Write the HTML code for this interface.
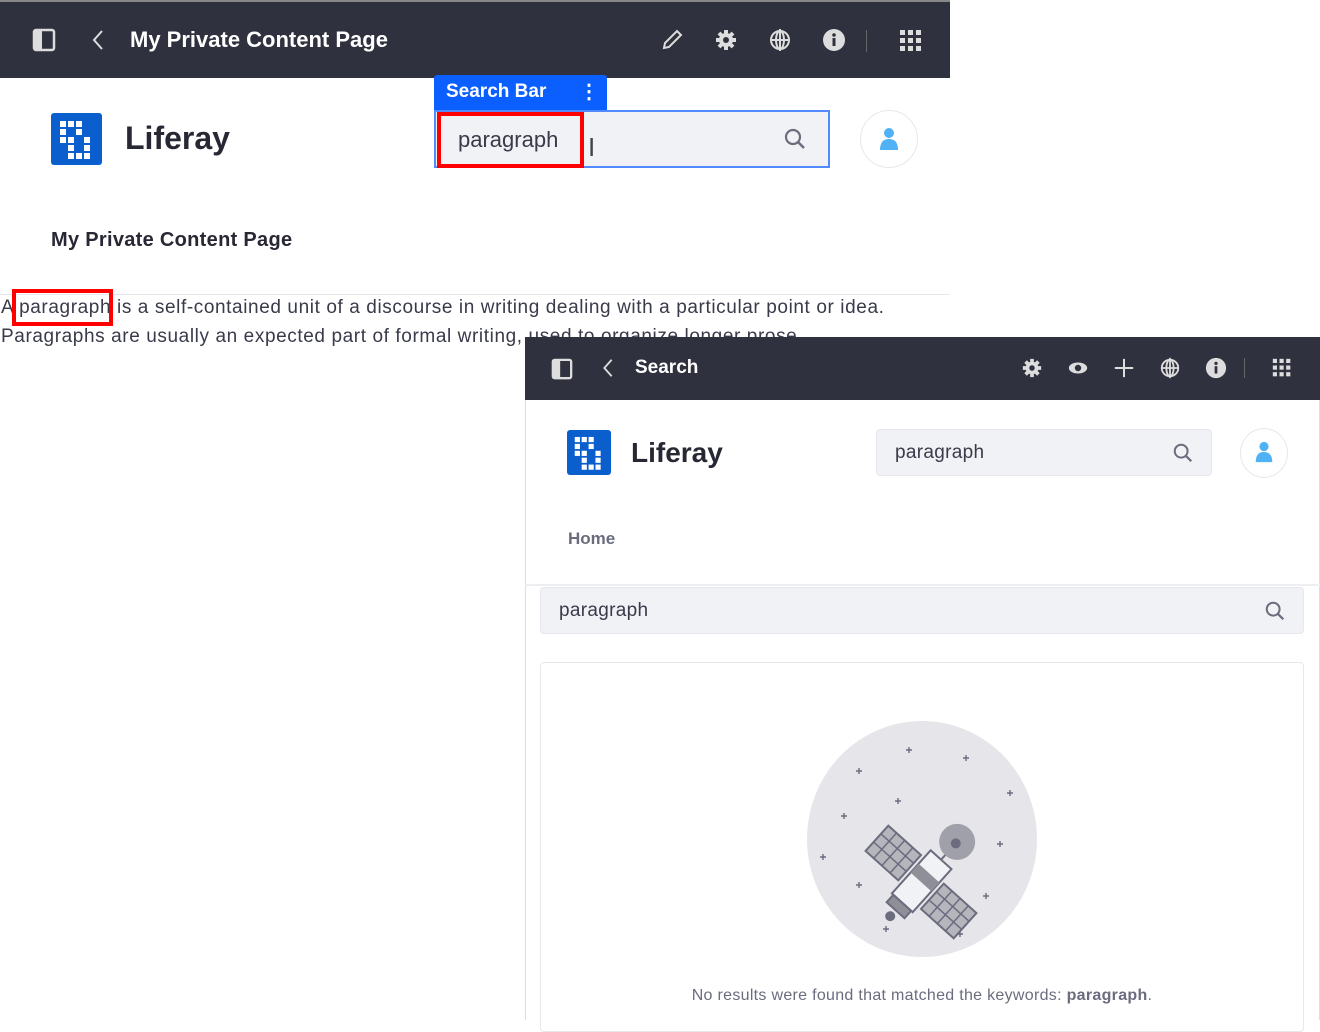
<!DOCTYPE html>
<html><head><meta charset="utf-8"><style>
*{margin:0;padding:0;box-sizing:border-box}
body{width:1320px;height:1020px;background:#fff;position:relative;overflow:hidden;font-family:"Liberation Sans",sans-serif;color:#272833}
.abs{position:absolute}
.bar{background:#30313f;color:#fff}
.t{font-weight:bold;white-space:nowrap}
.logo{background:#0b5fcd;border-radius:3px}
</style></head><body>

<div class="abs bar" style="left:0;top:0;width:950px;height:78px;border-top:2px solid #888"></div>
<svg class="abs" style="left:32px;top:28px" width="24" height="24" viewBox="0 0 24 24"><rect x="2" y="2" width="20" height="20" rx="2" fill="none" stroke="#ddd" stroke-width="2.5"/><rect x="2" y="2" width="8" height="20" fill="#ddd"/></svg>
<svg class="abs" style="left:90px;top:28px" width="16" height="24" viewBox="0 0 16 24"><path d="M12 3 L4 12 L12 21" fill="none" stroke="#ddd" stroke-width="2"/></svg>
<div class="abs t" style="left:130px;top:27px;font-size:22px;color:#fff">My Private Content Page</div>
<svg class="abs" style="left:660px;top:28px" width="24" height="24" viewBox="0 0 24 24"><path d="M4 20 L5 15 L17 3 L21 7 L9 19 Z" fill="none" stroke="#ddd" stroke-width="2"/></svg>
<svg class="abs" style="left:714px;top:28px" width="24" height="24" viewBox="0 0 24 24"><circle cx="12" cy="12" r="7" fill="#ddd"/><g stroke="#ddd" stroke-width="4"><path d="M12 2v20M2 12h20M5 5l14 14M19 5L5 19"/></g><circle cx="12" cy="12" r="3" fill="#30313f"/></svg>
<svg class="abs" style="left:768px;top:28px" width="24" height="24" viewBox="0 0 24 24"><circle cx="12" cy="12" r="9" fill="none" stroke="#ddd" stroke-width="2"/><ellipse cx="12" cy="12" rx="4" ry="9" fill="none" stroke="#ddd" stroke-width="2"/><path d="M3 12h18M12 1v22" stroke="#ddd" stroke-width="2"/></svg>
<svg class="abs" style="left:822px;top:28px" width="24" height="24" viewBox="0 0 24 24"><circle cx="12" cy="12" r="11" fill="#ddd"/><rect x="10.5" y="10" width="3" height="8" fill="#30313f"/><circle cx="12" cy="7" r="1.8" fill="#30313f"/></svg>
<div class="abs" style="left:866px;top:30px;width:1px;height:22px;background:#666"></div>
<svg class="abs" style="left:899px;top:29px" width="24" height="24" viewBox="0 0 24 24" fill="#ddd"><rect x="1" y="1" width="5" height="5"/><rect x="9" y="1" width="5" height="5"/><rect x="17" y="1" width="5" height="5"/><rect x="1" y="9" width="5" height="5"/><rect x="9" y="9" width="5" height="5"/><rect x="17" y="9" width="5" height="5"/><rect x="1" y="17" width="5" height="5"/><rect x="9" y="17" width="5" height="5"/><rect x="17" y="17" width="5" height="5"/></svg>

<svg class="abs logo" style="left:51px;top:113px" width="51" height="52" viewBox="0 0 51 52"><g fill="#fff"><rect x="9" y="8" width="6" height="6"/><rect x="17" y="8" width="6" height="6"/><rect x="25" y="8" width="6" height="6"/><rect x="9" y="16" width="6" height="6"/><rect x="25" y="16" width="6" height="6"/><rect x="9" y="24" width="6" height="6"/><rect x="17" y="24" width="6" height="6"/><rect x="33" y="24" width="6" height="6"/><rect x="17" y="32" width="6" height="6"/><rect x="33" y="32" width="6" height="6"/><rect x="17" y="40" width="6" height="6"/><rect x="25" y="40" width="6" height="6"/><rect x="33" y="40" width="6" height="6"/></g></svg>
<div class="abs t" style="left:125px;top:120px;font-size:32px">Liferay</div>

<div class="abs" style="left:434px;top:75px;width:173px;height:36px;background:#0b5fff;border-radius:3px 3px 0 0"></div>
<div class="abs t" style="left:446px;top:81px;font-size:19px;color:#fff">Search Bar</div>
<div class="abs t" style="left:579px;top:79px;font-size:20px;color:#fff">⋮</div>
<div class="abs" style="left:434px;top:110px;width:396px;height:58px;background:#f1f2f5;border:2px solid #528bff"></div>
<div class="abs" style="left:437px;top:112px;width:147px;height:56px;border:4px solid #f00"></div>
<div class="abs" style="left:458px;top:127px;font-size:22px;color:#393a4a">paragraph</div>
<div class="abs" style="left:588px;top:132px;font-size:26px;color:#444">I</div>
<svg class="abs" style="left:783px;top:127px" width="24" height="24" viewBox="0 0 24 24"><circle cx="10" cy="10" r="7" fill="none" stroke="#6b6c7e" stroke-width="2.2"/><path d="M15 15 L21 21" stroke="#6b6c7e" stroke-width="2.5"/></svg>
<div class="abs" style="left:860px;top:110px;width:58px;height:58px;border:1px solid #e7e7ed;border-radius:50%"></div>
<svg class="abs" style="left:877px;top:126px" width="24" height="26" viewBox="0 0 24 26" fill="#50b2f5"><circle cx="12" cy="7" r="5"/><path d="M3 24 Q3 13 12 13 Q21 13 21 24 Z"/></svg>

<div class="abs t" style="left:51px;top:229px;font-size:20px;letter-spacing:0.3px">My Private Content Page</div>
<div class="abs" style="left:0;top:294px;width:950px;height:1px;background:#e7e7ed"></div>
<div class="abs" style="left:1px;top:297px;font-size:19px;white-space:nowrap;color:#393a4a;letter-spacing:0.6px">A paragraph is a self-contained unit of a discourse in writing dealing with a particular point or idea.</div>
<div class="abs" style="left:12px;top:289px;width:101px;height:37px;border:4px solid #f00"></div>
<div class="abs" style="left:1px;top:326px;font-size:19px;white-space:nowrap;color:#393a4a;letter-spacing:0.6px">Paragraphs are usually an expected part of formal writing, used to organize longer prose.</div>

<div class="abs" style="left:525px;top:337px;width:795px;height:683px;background:#fff;border-left:1px solid #ddd;border-right:1px solid #ddd"></div>
<div class="abs bar" style="left:525px;top:337px;width:795px;height:63px"></div>
<svg class="abs" style="left:551px;top:358px" width="22" height="22" viewBox="0 0 24 24"><rect x="2" y="2" width="20" height="20" rx="2" fill="none" stroke="#ddd" stroke-width="2.5"/><rect x="2" y="2" width="8" height="20" fill="#ddd"/></svg>
<svg class="abs" style="left:600px;top:357px" width="16" height="22" viewBox="0 0 16 24"><path d="M12 3 L4 12 L12 21" fill="none" stroke="#ddd" stroke-width="2"/></svg>
<div class="abs t" style="left:635px;top:357px;font-size:19px;color:#fff">Search</div>
<svg class="abs" style="left:1021px;top:357px" width="22" height="22" viewBox="0 0 24 24"><circle cx="12" cy="12" r="7" fill="#ddd"/><g stroke="#ddd" stroke-width="4"><path d="M12 2v20M2 12h20M5 5l14 14M19 5L5 19"/></g><circle cx="12" cy="12" r="3" fill="#30313f"/></svg>
<svg class="abs" style="left:1067px;top:357px" width="22" height="22" viewBox="0 0 24 24"><ellipse cx="12" cy="12" rx="10" ry="6" fill="#ddd"/><circle cx="12" cy="12" r="3.5" fill="#30313f"/></svg>
<svg class="abs" style="left:1113px;top:357px" width="22" height="22" viewBox="0 0 24 24"><path d="M12 2v20M2 12h20" stroke="#ddd" stroke-width="2.2"/></svg>
<svg class="abs" style="left:1159px;top:357px" width="22" height="22" viewBox="0 0 24 24"><circle cx="12" cy="12" r="9" fill="none" stroke="#ddd" stroke-width="2"/><ellipse cx="12" cy="12" rx="4" ry="9" fill="none" stroke="#ddd" stroke-width="2"/><path d="M3 12h18M12 1v22" stroke="#ddd" stroke-width="2"/></svg>
<svg class="abs" style="left:1205px;top:357px" width="22" height="22" viewBox="0 0 24 24"><circle cx="12" cy="12" r="11" fill="#ddd"/><rect x="10.5" y="10" width="3" height="8" fill="#30313f"/><circle cx="12" cy="7" r="1.8" fill="#30313f"/></svg>
<div class="abs" style="left:1244px;top:358px;width:1px;height:20px;background:#666"></div>
<svg class="abs" style="left:1272px;top:358px" width="20" height="20" viewBox="0 0 24 24" fill="#ddd"><rect x="1" y="1" width="5" height="5"/><rect x="9" y="1" width="5" height="5"/><rect x="17" y="1" width="5" height="5"/><rect x="1" y="9" width="5" height="5"/><rect x="9" y="9" width="5" height="5"/><rect x="17" y="9" width="5" height="5"/><rect x="1" y="17" width="5" height="5"/><rect x="9" y="17" width="5" height="5"/><rect x="17" y="17" width="5" height="5"/></svg>

<svg class="abs logo" style="left:567px;top:430px" width="44" height="45" viewBox="0 0 51 52"><g fill="#fff"><rect x="9" y="8" width="6" height="6"/><rect x="17" y="8" width="6" height="6"/><rect x="25" y="8" width="6" height="6"/><rect x="9" y="16" width="6" height="6"/><rect x="25" y="16" width="6" height="6"/><rect x="9" y="24" width="6" height="6"/><rect x="17" y="24" width="6" height="6"/><rect x="33" y="24" width="6" height="6"/><rect x="17" y="32" width="6" height="6"/><rect x="33" y="32" width="6" height="6"/><rect x="17" y="40" width="6" height="6"/><rect x="25" y="40" width="6" height="6"/><rect x="33" y="40" width="6" height="6"/></g></svg>
<div class="abs t" style="left:631px;top:437px;font-size:28px">Liferay</div>
<div class="abs" style="left:876px;top:429px;width:336px;height:47px;background:#f1f2f5;border:1px solid #e7e7ed;border-radius:4px"></div>
<div class="abs" style="left:895px;top:442px;font-size:19px;color:#393a4a;letter-spacing:0.3px">paragraph</div>
<svg class="abs" style="left:1172px;top:442px" width="22" height="22" viewBox="0 0 24 24"><circle cx="10" cy="10" r="7" fill="none" stroke="#6b6c7e" stroke-width="2.2"/><path d="M15 15 L21 21" stroke="#6b6c7e" stroke-width="2.5"/></svg>
<div class="abs" style="left:1240px;top:428px;width:48px;height:50px;border:1px solid #e7e7ed;border-radius:50%"></div>
<svg class="abs" style="left:1253px;top:440px" width="22" height="24" viewBox="0 0 24 26" fill="#50b2f5"><circle cx="12" cy="7" r="5"/><path d="M3 24 Q3 13 12 13 Q21 13 21 24 Z"/></svg>
<div class="abs t" style="left:568px;top:529px;font-size:17px;color:#6b6c7e">Home</div>
<div class="abs" style="left:525px;top:584px;width:795px;height:2px;background:#eceef2"></div>
<div class="abs" style="left:540px;top:587px;width:764px;height:47px;background:#f1f2f5;border:1px solid #e7e7ed;border-radius:4px"></div>
<div class="abs" style="left:559px;top:600px;font-size:19px;color:#393a4a;letter-spacing:0.3px">paragraph</div>
<svg class="abs" style="left:1264px;top:600px" width="22" height="22" viewBox="0 0 24 24"><circle cx="10" cy="10" r="7" fill="none" stroke="#6b6c7e" stroke-width="2.2"/><path d="M15 15 L21 21" stroke="#6b6c7e" stroke-width="2.5"/></svg>

<div class="abs" style="left:540px;top:662px;width:764px;height:370px;border:1px solid #e7e7ed;border-radius:4px"></div>
<svg class="abs" style="left:806px;top:720px" width="232" height="238" viewBox="0 0 232 238">
<ellipse cx="116" cy="119" rx="115" ry="118" fill="#e6e6ea"/>
<g stroke="#6b6c7e" stroke-width="1.4"><path d="M103 27v6M100 30h6M160 35v6M157 38h6M53 48v6M50 51h6M204 70v6M201 73h6M92 78v6M89 81h6M38 93v6M35 96h6M147 107v6M144 110h6M194 121v6M191 124h6M17 134v6M14 137h6M53 162v6M50 165h6M180 173v6M177 176h6M80 206v6M77 209h6M154 211v6M151 214h6"/></g>
<g transform="translate(115,162) rotate(42)">
<line x1="0" y1="-30" x2="0" y2="-48" stroke="#6b6c7e" stroke-width="2"/>
<circle cx="0" cy="-54" r="18" fill="#a0a0aa"/><circle cx="0" cy="-52" r="5" fill="#6b6c7e"/>
<rect x="-62" y="-20" width="44" height="34" fill="#b5b5bc" stroke="#6b6c7e" stroke-width="2"/>
<rect x="18" y="-14" width="44" height="34" fill="#b5b5bc" stroke="#6b6c7e" stroke-width="2"/>
<path d="M-62 -9h44M-62 2h44M-51 -20v34M-40 -20v34M-29 -20v34M18 -3h44M18 8h44M29 -14v34M40 -14v34M51 -14v34" stroke="#6b6c7e" stroke-width="1.5"/>
<rect x="-14" y="-30" width="28" height="58" fill="#f1f2f5" stroke="#6b6c7e" stroke-width="2"/>
<rect x="-14" y="-12" width="28" height="12" fill="#8f8f9a"/>
<rect x="-12" y="28" width="24" height="10" fill="#8f8f9a" stroke="#6b6c7e" stroke-width="2"/>
<circle cx="0" cy="46" r="5" fill="#6b6c7e"/>
</g></svg>
<div class="abs" style="left:540px;top:987px;width:764px;text-align:center;font-size:16px;color:#6b6c7e;letter-spacing:0.3px">No results were found that matched the keywords: <b style="color:#6b6c7e">paragraph</b>.</div>
</body></html>
